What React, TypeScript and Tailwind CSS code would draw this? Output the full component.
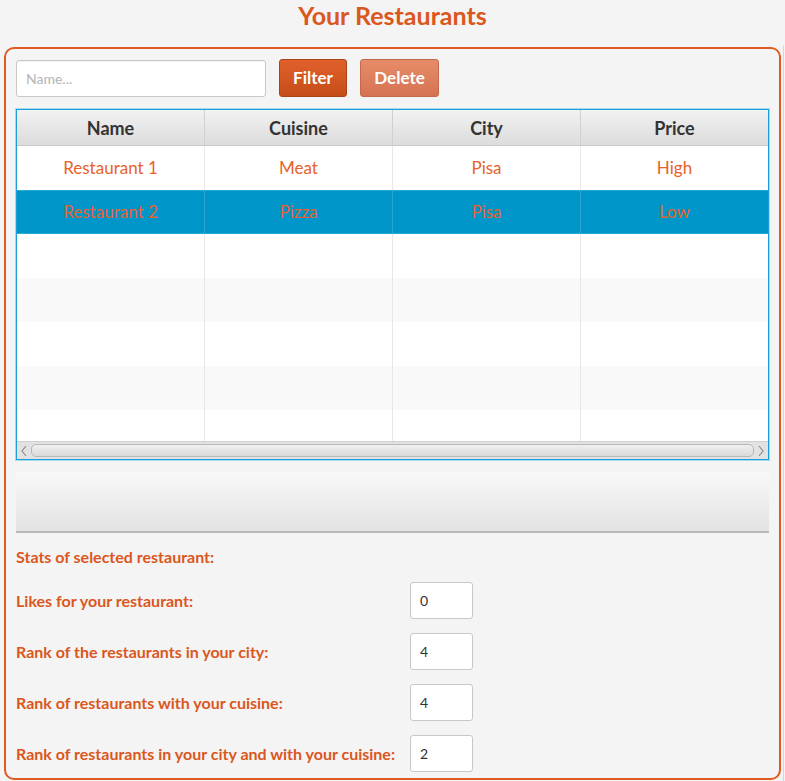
import React, { useState } from 'react'

const ROWS = [
  { name: 'Restaurant 1', cuisine: 'Meat', city: 'Pisa', price: 'High' },
  { name: 'Restaurant 2', cuisine: 'Pizza', city: 'Pisa', price: 'Low' },
]

const STATS = [
  { label: 'Likes for your restaurant:', value: '0' },
  { label: 'Rank of the restaurants in your city:', value: '4' },
  { label: 'Rank of restaurants with your cuisine:', value: '4' },
  { label: 'Rank of restaurants in your city and with your cuisine:', value: '2' },
]

const COLS = ['Name', 'Cuisine', 'City', 'Price']

function Chevron({ dir }: { dir: 'left' | 'right' }) {
  return (
    <svg width="12" height="14" viewBox="0 0 12 14" className="shrink-0">
      <path
        d={dir === 'left' ? 'M8 2 L4 7 L8 12' : 'M4 2 L8 7 L4 12'}
        fill="none"
        stroke="#8c8c8c"
        strokeWidth="1.2"
      />
    </svg>
  )
}

export default function App() {
  const [selected, setSelected] = useState(1)
  const [query, setQuery] = useState('')

  return (
    <div className="relative h-[781px] w-[785px] overflow-hidden bg-[#f4f4f4] font-['Lato','Open_Sans',sans-serif]">
      <h1 className="h-[47px] text-center text-[25px] font-bold leading-[30px] text-[#db5720]">
        Your Restaurants
      </h1>

      <div className="ml-[4px] h-[733px] w-[777px] rounded-[10px] border-2 border-[#e05b22] px-[10px] pt-[10px]">
        {/* toolbar */}
        <div className="flex items-center gap-[13px]">
          <input
            value={query}
            onChange={(e) => setQuery(e.target.value)}
            placeholder="Name..."
            className="h-[37px] w-[250px] rounded-[3px] border border-[#c8c8c8] bg-white px-[9px] text-[14px] text-[#333] placeholder:text-[#b4b4b4] shadow-[inset_0_1px_1px_rgba(0,0,0,0.05)] outline-none"
          />
          <button
            type="button"
            className="h-[38px] w-[68px] rounded-[3px] border border-[#a9431a] bg-gradient-to-b from-[#e0602a] to-[#c64d19] text-[17px] font-bold text-white"
          >
            Filter
          </button>
          <button
            type="button"
            className="h-[38px] w-[79px] rounded-[3px] border border-[#c26a4a] bg-gradient-to-b from-[#e78c68] to-[#d47352] text-[17px] font-bold text-white"
          >
            Delete
          </button>
        </div>

        {/* table */}
        <div className="mt-[12px] w-[753px] border border-[#17a1d6] shadow-[0_0_0_1px_#a6daf0]">
          <div className="grid h-[36px] grid-cols-[188px_188px_188px_187px] border-b border-[#c9c9c9] bg-gradient-to-b from-[#f2f2f2] to-[#dcdcdc]">
            {COLS.map((c, i) => (
              <div
                key={c}
                className={`flex items-center justify-center pt-[2px] text-[18px] font-bold text-[#333] ${i < 3 ? 'border-r border-[#d0d0d0]' : ''}`}
              >
                {c}
              </div>
            ))}
          </div>
          <div className="h-[295px] overflow-hidden">
            {Array.from({ length: 7 }).map((_, r) => {
              const row = ROWS[r]
              const isSel = r === selected
              const bg = isSel ? 'bg-[#0096c9] border-y border-[#2aa9d6]' : r % 2 === 0 ? 'bg-white' : 'bg-[#f9f9f9]'
              return (
                <div
                  key={r}
                  onClick={() => row && setSelected(r)}
                  className={`grid h-[44px] grid-cols-[188px_188px_188px_187px] ${bg}`}
                >
                  {[row?.name, row?.cuisine, row?.city, row?.price].map((v, i) => (
                    <div
                      key={i}
                      className={`flex items-center justify-center text-[17px] text-[#e8622a] ${
                        i < 3 ? (isSel ? 'border-r border-[#2aa3cf]' : 'border-r border-[#e8e8e8]') : ''
                      }`}
                    >
                      {v ?? ''}
                    </div>
                  ))}
                </div>
              )
            })}
          </div>
          {/* horizontal scrollbar */}
          <div className="flex h-[18px] items-center gap-[1px] border-t border-[#cfcfcf] bg-[#e2e2e2] px-[1px]">
            <Chevron dir="left" />
            <div className="h-[13px] flex-1 rounded-[5px] border border-[#b8b8b8] bg-gradient-to-b from-[#f0f0f0] to-[#dadada]" />
            <Chevron dir="right" />
          </div>
        </div>

        {/* empty toolbar area */}
        <div className="mt-[12px] h-[61px] w-[753px] border-b-2 border-[#b9b9b9] bg-gradient-to-b from-[#f8f8f8] to-[#e3e3e3]" />

        {/* stats */}
        <div className="mt-[14px] text-[16px] font-bold leading-[20px] text-[#db5720]">Stats of selected restaurant:</div>
        <div className="mt-[15px] flex flex-col gap-[14px]">
          {STATS.map((s) => (
            <div key={s.label} className="flex items-center">
              <span className="w-[394px] text-[16px] font-bold text-[#db5720]">{s.label}</span>
              <input
                readOnly
                value={s.value}
                className="h-[37px] w-[63px] rounded-[3px] border border-[#c8c8c8] bg-white px-[9px] text-[14px] text-[#333] outline-none"
              />
            </div>
          ))}
        </div>
      </div>

      <div className="absolute right-[1px] top-[45px] h-[736px] w-[1px] bg-[#d6d6d6]" />
    </div>
  )
}
